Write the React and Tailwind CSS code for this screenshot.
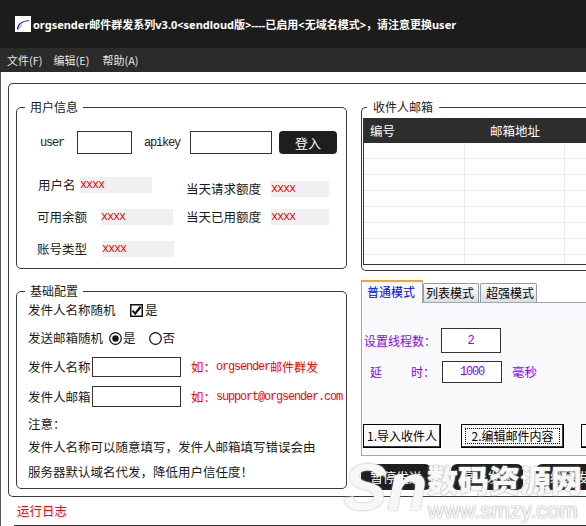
import React from "react";

const CJK = "[font-family:Noto_Sans_CJK_SC,Noto_Sans,sans-serif]";
const MONO = "[font-family:Liberation_Mono,Noto_Sans_CJK_SC,monospace]";

function Box({ title, className, legendClass, children }) {
  return (
    <fieldset className={`min-w-0 border border-[#3a3a3a] rounded-[5px] ${className}`}>
      <legend className={`text-[12px] leading-[16px] text-[#1a1a1a] ${legendClass}`}>{title}</legend>
      {children}
    </fieldset>
  );
}

function Val({ w }) {
  return (
    <div className={`h-[16px] bg-[#f0f0f0] flex items-center shrink-0 ${w}`}>
      <span className={`${MONO} text-[12px] leading-[12px] tracking-[-1.2px] text-[#ff0000]`}>xxxx</span>
    </div>
  );
}

function Label({ w, children, className = "" }) {
  return <span className={`shrink-0 text-[12.5px] leading-[16px] text-[#1a1a1a] ${w} ${className}`}>{children}</span>;
}

function Radio({ on }) {
  return (
    <svg width="13" height="13" viewBox="0 0 13 13" className="shrink-0">
      <circle cx="6.5" cy="6.5" r="5.8" fill="#fff" stroke="#111" strokeWidth="1.2" />
      {on && <circle cx="6.5" cy="6.5" r="3.2" fill="#111" />}
    </svg>
  );
}

function WinButton({ w, className = "", focus, children }) {
  return (
    <div
      className={`relative h-[24px] shrink-0 border border-black bg-[#fafafa] shadow-[inset_-1px_-1px_0_#3a3a3a,inset_1px_1px_0_#ffffff] flex items-center justify-center text-[12px] leading-[16px] text-black whitespace-nowrap ${w} ${className}`}
    >
      {focus && <div className="absolute inset-[3px] border border-dotted border-black" />}
      <span className="relative">{children}</span>
    </div>
  );
}

function Mono({ children, className = "" }) {
  return <span className={`${MONO} text-[12px] leading-[16px] tracking-[-1.2px] ${className}`}>{children}</span>;
}

export default function App() {
  return (
    <div className={`relative w-[586px] h-[526px] overflow-hidden bg-white ${CJK}`}>
      {/* title bar */}
      <div className="h-[48px] bg-[#1c1c1c] flex items-center pl-[15px]">
        <div className="w-[16px] h-[16px] bg-white flex items-center justify-center shrink-0">
          <svg width="16" height="16" viewBox="0 0 16 16">
            <path d="M2.5 13.5 C2.5 8.5 7 5 14 4.5" fill="none" stroke="#2a2a9a" strokeWidth="1.2" />
            <path d="M3 13.2 C5 12.2 6 10 6.5 8.6" fill="none" stroke="#6a6ac8" strokeWidth="0.8" />
          </svg>
        </div>
        <span className="ml-[2px] mt-[2px] text-[11px] leading-[16px] font-bold text-white whitespace-nowrap [font-family:Noto_Sans,Noto_Sans_CJK_SC,sans-serif]">
          orgsender邮件群发系列v3.0&lt;sendloud版&gt;----已启用&lt;无域名模式&gt;，请注意更换user
        </span>
      </div>

      {/* menu bar */}
      <div className="h-[24px] bg-[#2b2b2b] flex items-center text-[11px] leading-[16px] text-[#e6e6e6] whitespace-nowrap">
        <span className="ml-[7px]">文件(F)</span>
        <span className="ml-[11px]">编辑(E)</span>
        <span className="ml-[13px]">帮助(A)</span>
      </div>

      {/* main */}
      <div className="h-[454px] border-l border-[#555] bg-white">
        <div className="pt-[11px] pl-[7px]">
          <div className="w-[640px] h-[414px] border border-r-0 border-[#3a3a3a] rounded-l-[5px] flex">
            {/* left column */}
            <div className="pl-[7px] flex flex-col shrink-0">
              <Box title="用户信息" className="mt-[15px] w-[331px] h-[170px]" legendClass="ml-[8px] px-[5px]">
                <div className="flex items-center h-[23px] mt-[16px]">
                  <Mono className="ml-[23px] w-[24px] shrink-0 text-[#222]">user</Mono>
                  <div className="ml-[13px] w-[55px] h-[23px] border border-[#333] shrink-0" />
                  <Mono className="ml-[12px] w-[36px] shrink-0 text-[#222]">apikey</Mono>
                  <div className="ml-[10px] w-[82px] h-[23px] border border-[#333] shrink-0" />
                  <div className="ml-[7px] w-[58px] h-[23px] bg-[#1e1e1e] rounded-[4px] text-white text-[13px] flex items-center justify-center shrink-0">
                    登入
                  </div>
                </div>
                <div className="flex items-start mt-[23px]">
                  <div className="flex items-center ml-[21px]">
                    <Label w="w-[42px]">用户名</Label>
                    <Val w="w-[72px]" />
                  </div>
                  <div className="flex items-center ml-[34px] mt-[4px]">
                    <Label w="w-[85px]">当天请求额度</Label>
                    <Val w="w-[58px]" />
                  </div>
                </div>
                <div className="flex items-start mt-[12px]">
                  <div className="flex items-center ml-[20px]">
                    <Label w="w-[64px]">可用余额</Label>
                    <Val w="w-[72px]" />
                  </div>
                  <div className="flex items-center ml-[13px]">
                    <Label w="w-[85px]">当天已用额度</Label>
                    <Val w="w-[58px]" />
                  </div>
                </div>
                <div className="flex items-center mt-[16px] ml-[20px]">
                  <Label w="w-[65px]">账号类型</Label>
                  <Val w="w-[72px]" />
                </div>
              </Box>

              <Box title="基础配置" className="mt-[14px] w-[331px] h-[206px]" legendClass="ml-[8px] px-[5px]">
                <div className="flex items-center h-[16px] mt-[3px] ml-[11px]">
                  <Label w="w-[102px]">发件人名称随机</Label>
                  <svg width="13" height="13" viewBox="0 0 13 13" className="shrink-0">
                    <rect x="0.75" y="0.75" width="11.5" height="11.5" fill="#fff" stroke="#111" strokeWidth="1.5" />
                    <path d="M2.6 6.6 L5.2 9.6 L10.6 2.8" fill="none" stroke="#111" strokeWidth="2.2" />
                  </svg>
                  <Label w="" className="ml-[2px]">是</Label>
                </div>
                <div className="flex items-center h-[16px] mt-[12px] ml-[11px]">
                  <Label w="w-[81px]">发送邮箱随机</Label>
                  <Radio on />
                  <Label w="" className="ml-[1px]">是</Label>
                  <div className="ml-[13px] flex">
                    <Radio />
                  </div>
                  <Label w="" className="ml-[1px]">否</Label>
                </div>
                <div className="flex items-center mt-[11px] ml-[11px]">
                  <Label w="w-[64px]">发件人名称</Label>
                  <div className="w-[89px] h-[20px] border border-[#333] shrink-0" />
                  <span className="ml-[10px] flex items-center text-[#ff0000] whitespace-nowrap">
                    <span className="text-[12.5px] leading-[16px]">如：</span>
                    <Mono>orgsender</Mono>
                    <span className="text-[12px] leading-[16px]">邮件群发</span>
                  </span>
                </div>
                <div className="flex items-center mt-[9px] ml-[11px]">
                  <Label w="w-[64px]">发件人邮箱</Label>
                  <div className="w-[89px] h-[21px] border border-[#333] shrink-0" />
                  <span className="ml-[10px] flex items-center text-[#ff0000] whitespace-nowrap">
                    <span className="text-[12.5px] leading-[16px]">如：</span>
                    <Mono>support@orgsender.com</Mono>
                  </span>
                </div>
                <div className="flex mt-[9px] ml-[11px]">
                  <Label w="">注意：</Label>
                </div>
                <div className="flex mt-[7px] ml-[11px] whitespace-nowrap">
                  <Label w="">发件人名称可以随意填写，发件人邮箱填写错误会由</Label>
                </div>
                <div className="flex mt-[9px] ml-[11px] whitespace-nowrap">
                  <Label w="">服务器默认域名代发，降低用户信任度！</Label>
                </div>
              </Box>
            </div>

            {/* right column */}
            <div className="ml-[14px] flex-1 flex flex-col min-w-0">
              <Box title="收件人邮箱" className="mt-[15px] h-[172px] border-r-0 rounded-r-none" legendClass="ml-[5px] px-[6px]">
                <div className="mt-[3px] ml-[1px] h-[147px] border-l border-b border-[#333] overflow-hidden">
                  <div className="h-[25px] bg-[#2e2e2e] flex items-center text-white text-[12.5px] leading-[16px]">
                    <div className="w-[101px] pl-[6px] shrink-0">编号</div>
                    <div className="w-[100px] flex justify-center shrink-0">邮箱地址</div>
                  </div>
                  {[0, 1, 2, 3, 4, 5, 6, 7].map((i) => (
                    <div key={i} className="h-[16px] flex border-b border-[#ececec]">
                      <div className="w-[101px] border-r border-[#ececec] shrink-0" />
                      <div className="w-[100px] border-r border-[#ececec] shrink-0" />
                      <div className="flex-1" />
                    </div>
                  ))}
                </div>
              </Box>

              {/* tabs */}
              <div className="mt-[9px] flex items-end h-[22px] relative z-10 text-[12px]">
                <div className="w-[62px] h-[23px] -mb-[1px] border-t-2 border-t-[#f5a623] border-x border-x-[#9aa9b5] bg-[#f9f9fc] text-[#0000ff] pl-[5px] leading-[20px]">
                  普通模式
                </div>
                <div className="w-[56px] h-[19px] border border-[#8f9ca8] border-b-0 rounded-t-[2px] bg-gradient-to-b from-[#fbfbfb] to-[#dedede] text-black pl-[2px] leading-[18px]">
                  列表模式
                </div>
                <div className="ml-[1px] w-[57px] h-[19px] border border-[#8f9ca8] border-b-0 rounded-t-[2px] bg-gradient-to-b from-[#fbfbfb] to-[#dedede] text-black pl-[5px] leading-[18px]">
                  超强模式
                </div>
              </div>
              <div className="h-[154px] border border-r-0 border-[#9aa9b5] bg-[#f9f9fc] flex flex-col text-[12px] leading-[16px]">
                <div className="flex items-center mt-[25px] ml-[2px] text-[#8800ff]">
                  <span className="w-[77px] shrink-0">设置线程数：</span>
                  <div className="w-[60px] h-[25px] border border-[#333] bg-white flex items-center justify-center">
                    <Mono className="tracking-normal">2</Mono>
                  </div>
                </div>
                <div className="flex items-center mt-[8px] text-[#8800ff]">
                  <span className="ml-[8px]">延</span>
                  <span className="ml-[29px]">时：</span>
                  <div className="ml-[7px] w-[60px] h-[22px] border border-[#333] bg-white flex items-center justify-center">
                    <Mono>1000</Mono>
                  </div>
                  <span className="ml-[10px] text-[12.5px]">毫秒</span>
                </div>
                <div className="flex mt-[41px]">
                  <WinButton w="w-[78px]" className="ml-[1px]">1.导入收件人</WinButton>
                  <WinButton w="w-[103px]" className="ml-[20px]" focus>
                    2.编辑邮件内容
                  </WinButton>
                  <WinButton w="w-[80px]" className="ml-[17px]">3.开始发送</WinButton>
                </div>
              </div>

              {/* black buttons */}
              <div className="flex mt-[8px] h-[26px] text-[13px] leading-[16px] text-white">
                <div className="w-[70px] bg-[#1e1e1e] rounded-[6px] flex items-center justify-center shrink-0">暂停发送</div>
                <div className="ml-[20px] w-[72px] bg-[#1e1e1e] rounded-[6px] flex items-center justify-center shrink-0">停止发送</div>
                <div className="ml-[13px] w-[80px] bg-[#1e1e1e] rounded-[6px] flex items-center justify-center shrink-0">继续发送</div>
              </div>
            </div>
          </div>
        </div>

        <div className="mt-[6px] ml-[16px] text-[12.5px] leading-[16px] text-[#ff0000]">运行日志</div>
        <div className="mt-[6px] ml-[13px] border-t border-[#333]" />
      </div>

      {/* watermark overlay */}
      <div className="absolute left-[343px] top-[452px] pointer-events-none text-[66px] leading-[70px] font-bold italic text-white/90 [font-family:Liberation_Sans,sans-serif] [text-shadow:0_0_1px_#aaa,0_0_2px_#ccc]">
        Sn
      </div>
      <div className="absolute left-[427px] top-[458px] pointer-events-none text-[31px] leading-[42px] font-black text-white/95 whitespace-nowrap [text-shadow:0_0_1px_#999,0_0_2px_#bbb]">
        数码资源网
      </div>
      <div className="absolute left-[428px] top-[500px] pointer-events-none text-[22px] leading-[22px] text-white/95 whitespace-nowrap [font-family:Liberation_Sans,sans-serif] [text-shadow:0_0_1px_#999,0_0_2px_#bbb]">
        www.smzy.com
      </div>
    </div>
  );
}
